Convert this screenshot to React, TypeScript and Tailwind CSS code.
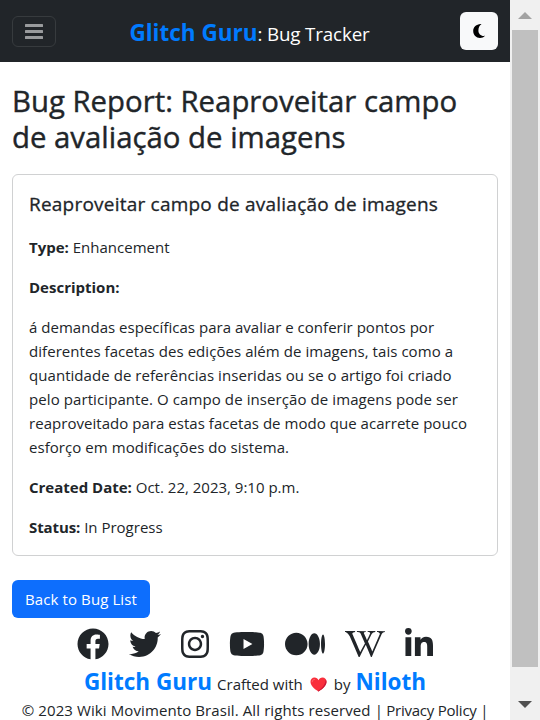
import type { ReactNode } from 'react';
import { FaFacebook } from 'react-icons/fa';
import { FaTwitter, FaInstagram, FaYoutube, FaMedium, FaWikipediaW, FaLinkedinIn } from 'react-icons/fa6';

function Line({ children, className = '' }: { children: ReactNode; className?: string }) {
  return <span className={`block whitespace-nowrap ${className}`}>{children}</span>;
}

function Navbar() {
  return (
    <nav className="flex h-[62px] items-center justify-between bg-[#212529] px-3">
      <button className="flex h-[31px] w-11 items-center justify-center rounded-md border border-[#373b3e]" aria-label="Menu">
        <svg width="18" height="17" viewBox="0 0 18 17" fill="#999b9d">
          <rect y="1" width="18" height="3" rx=".5" />
          <rect y="7" width="18" height="3" rx=".5" />
          <rect y="13" width="18" height="3" rx=".5" />
        </svg>
      </button>
      <div className="mt-1 ml-[-17px] whitespace-nowrap text-[18.75px] leading-[30px] text-white">
        <span className="text-[22.5px] font-bold text-[#007bff]">Glitch Guru</span>
        <span className="tracking-[-0.14px]">: Bug Tracker</span>
      </div>
      <button className="flex size-[38px] items-center justify-center rounded-md bg-[#f8f9fa]" aria-label="Dark mode">
        <svg width="12" height="14" viewBox="0 0 12 14">
          <path d="M7.5 0C3.5.2.2 3.1.2 7s3.1 7 6.8 7c2 0 3.8-.8 5-2.2-3.8.7-6.6-1.900-6.600-5.400C5.400 3.600 6.400 1.500 8.500.2Z" fill="#000" />
        </svg>
      </button>
    </nav>
  );
}

function Report() {
  return (
    <main className="px-3 pt-[21px]">
      <h1 className="text-[29.35px] leading-9 [-webkit-text-stroke:0.4px_#212529]">
        <Line>Bug Report: Reaproveitar campo</Line>
        <Line>de avaliação de imagens</Line>
      </h1>
      <section className="mt-[19px] h-[382px] rounded-md border border-[#d0d1d2] px-4 pt-[17px]">
        <h5 className="mb-[19px] whitespace-nowrap text-[19px] leading-6 tracking-[0.22px] [-webkit-text-stroke:0.3px_#212529]">
          Reaproveitar campo de avaliação de imagens
        </h5>
        <div className="flex flex-col gap-4">
          <p><b>Type:</b> Enhancement</p>
          <p><b>Description:</b></p>
          <p>
            <Line className="tracking-[0.025px]">á demandas específicas para avaliar e conferir pontos por</Line>
            <Line className="tracking-[0.055px]">diferentes facetas des edições além de imagens, tais como a</Line>
            <Line className="tracking-[0.055px]">quantidade de referências inseridas ou se o artigo foi criado</Line>
            <Line className="tracking-[0.09px]">pelo participante. O campo de inserção de imagens pode ser</Line>
            <Line className="tracking-[0.04px]">reaproveitado para estas facetas de modo que acarrete pouco</Line>
            <Line className="tracking-[0.055px]">esforço em modificações do sistema.</Line>
          </p>
          <p><b>Created Date:</b> Oct. 22, 2023, 9:10 p.m.</p>
          <p><b className="tracking-[-0.1px]">Status:</b> In Progress</p>
        </div>
      </section>
      <button className="mt-6 flex h-[38px] w-[138px] items-center justify-center whitespace-nowrap rounded-md bg-[#0d6efd] tracking-[0.1px] text-white">
        Back to Bug List
      </button>
    </main>
  );
}

function Footer() {
  return (
    <footer className="pt-[10px]">
      <div className="flex h-8 items-center justify-center gap-5">
        <FaFacebook className="h-8 w-8" />
        <FaTwitter className="h-8 w-8" />
        <FaInstagram viewBox="0 0 448 512" className="h-8 w-7" />
        <FaYoutube viewBox="0 0 576 512" className="h-8 w-9" />
        <FaMedium viewBox="0 0 640 512" className="h-8 w-10" />
        <FaWikipediaW viewBox="0 0 640 512" className="h-8 w-10" />
        <FaLinkedinIn viewBox="0 0 448 512" className="h-8 w-7" />
      </div>
      <div className="mt-[7px] flex h-[30px] items-baseline justify-center whitespace-nowrap leading-[30px]">
        <b className="text-[22.5px] text-[#007bff]">Glitch Guru</b>
        <span className="ml-[5px]">Crafted with</span>
        <svg className="mx-[7px] translate-y-[2px]" width="17" height="15" viewBox="0 0 17 15">
          <path d="M8.500 14.500C3.500 11.500.5 8.300.5 4.800.5 2.400 2.200.6 4.500.6c1.800 0 3.200 1 4 2.600C9.300 1.600 10.700.6 12.500.6c2.300 0 4 1.800 4 4.200 0 3.500-3 6.700-8 9.700Z" fill="#f92f3c" />
          <path d="M2.200 4.800c0-1.300.8-2.200 2.100-2.300" fill="none" stroke="#ff6a70" strokeWidth="1" strokeLinecap="round" />
          <path d="M8.500 14.500c5-3 8-6.200 8-9.700 0-1-.3-1.900-.9-2.600.2 4.600-2.700 8.300-7.900 11.800Z" fill="#ca1737" />
        </svg>
        <span>by</span>
        <b className="ml-[5px] text-[22.5px] text-[#007bff]">Niloth</b>
      </div>
      <p className="mt-px whitespace-nowrap text-center">
        <span className="tracking-[0.1px]">© 2023 Wiki Movimento Brasil. All rights reserved </span>
        <span className="tracking-[-0.24px]">| Privacy Policy |</span>
      </p>
    </footer>
  );
}

function Scrollbar() {
  return (
    <aside className="flex h-full w-[30px] shrink-0 flex-col items-center bg-[#f0f0f0]">
      <svg className="shrink-0" width="30" height="30" viewBox="0 0 30 30"><path d="M15 12l7 7H8z" fill="#a3a3a3" /></svg>
      <div className="h-[637px] w-[26px] bg-[#c0c0c0]" />
      <svg className="mt-[23px]" width="30" height="30" viewBox="0 0 30 30"><path d="M15 18l7-7H8z" fill="#505050" /></svg>
    </aside>
  );
}

export default function App() {
  return (
    <div className="flex h-[720px] w-[540px] overflow-hidden bg-white font-['Open_Sans',sans-serif] text-[15px] leading-6 text-[#212529]">
      <div className="w-[510px] shrink-0">
        <Navbar />
        <Report />
        <Footer />
      </div>
      <Scrollbar />
    </div>
  );
}
